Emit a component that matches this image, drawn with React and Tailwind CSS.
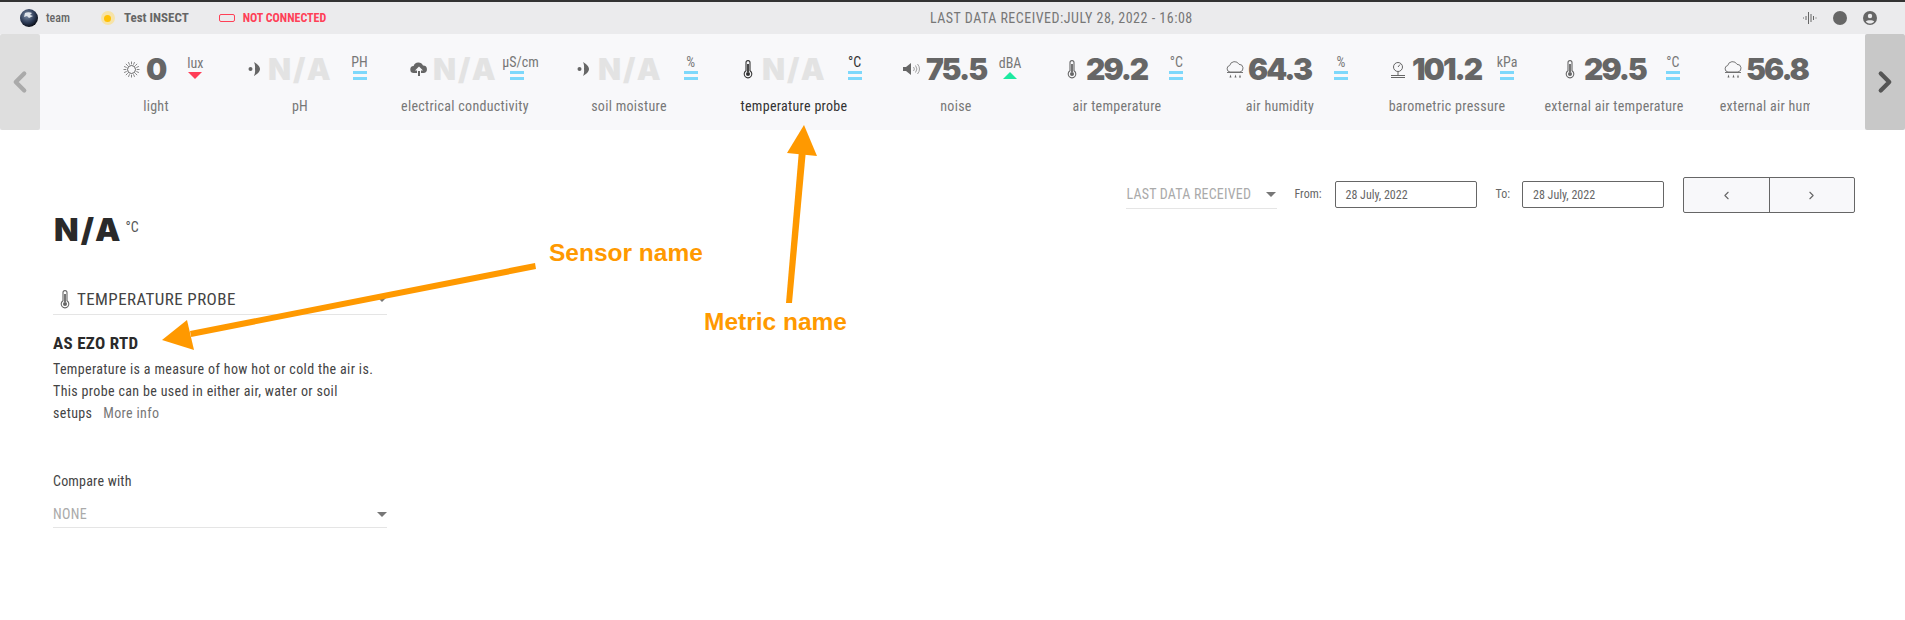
import { ChevronLeft, ChevronRight } from 'lucide-react';

const cond = { fontFamily: '"Roboto", sans-serif' };

const Thermo = ({ dark }) => (
  <svg width="10" height="19" viewBox="0 0 10 19" fill="none" stroke={dark ? '#333' : '#666'} strokeWidth="1.1">
    <path d="M3 10.8V2.6a2 2 0 0 1 4 0v8.2a3.8 3.8 0 1 1-4 0Z" />
    <path d="M5 4v8" strokeWidth="1.8" />
    <circle cx="5" cy="14" r="2" fill={dark ? '#333' : '#666'} stroke="none" />
  </svg>
);

const SunIcon = () => (
  <svg width="17" height="17" viewBox="0 0 17 17" fill="none" stroke="#666">
    <circle cx="8.5" cy="8.5" r="4" strokeWidth="1" />
    {[...Array(16)].map((_, i) => {
      const a = (i * Math.PI) / 8;
      return (
        <line key={i} x1={8.5 + 5.2 * Math.cos(a)} y1={8.5 + 5.2 * Math.sin(a)} x2={8.5 + 8 * Math.cos(a)} y2={8.5 + 8 * Math.sin(a)} strokeWidth="0.8" />
      );
    })}
  </svg>
);

const DropIcon = () => (
  <svg width="13" height="14" viewBox="0 0 13 14" fill="#666">
    <circle cx="2.5" cy="7" r="2" />
    <path d="M6 0c3 2 6 4 6 7s-3 5-6 7c1-2 1.300-4.500 1-7 .3-2.500 0-5-1-7Z" />
  </svg>
);

const CloudUp = () => (
  <svg width="18" height="14" viewBox="0 0 18 14" fill="#666">
    <path d="M4 11a3.500 3.500 0 0 1-.4-7A5 5 0 0 1 13 3.500 3.800 3.800 0 0 1 14 11h-3V8.500h2L9 4.500 5 8.500h2V11Z" />
    <rect x="8" y="9" width="2" height="5" />
  </svg>
);

const Speaker = () => (
  <svg width="18" height="14" viewBox="0 0 18 14" fill="none" stroke="#888" strokeWidth="0.8">
    <path d="M0 5h3l5-4v12L3 9H0Z" fill="#666" stroke="none" />
    <path d="M10.500 5a3 3 0 0 1 0 4M12.500 3.500a5.500 5.500 0 0 1 0 7M14.500 2a8 8 0 0 1 0 10" />
  </svg>
);

const RainCloud = () => (
  <svg width="18" height="19" viewBox="0 0 18 19" fill="none" stroke="#666" strokeWidth="0.9">
    <path d="M4 12a3.300 3.300 0 0 1-.3-6.500A5 5 0 0 1 13 4.300 3.900 3.900 0 0 1 14 12Z" />
    <path d="M1 12.500h16" />
    <path d="M4.500 14.500 3.500 17.500h2ZM9.500 14.500l-1 3h2ZM14 14.500l-1 3h2Z" fill="#666" stroke="none" />
  </svg>
);

const Gauge = () => (
  <svg width="16" height="17" viewBox="0 0 16 17" fill="none" stroke="#666" strokeWidth="1">
    <circle cx="8" cy="6" r="4.500" />
    <path d="M8 6l2-2.500" />
    <path d="M8 10.500V14M1 14.500h14M1 16.500h14" />
  </svg>
);

const metrics = [
  { label: 'light', value: '0', unit: 'lux', trend: 'down', icon: <SunIcon />, cell: 'w-[120px]', pad: 'pl-[27px]', gap: 'w-[23px]', unitMl: 'ml-[16px]' },
  { label: 'pH', value: 'N/A', unit: 'PH', icon: <DropIcon />, cell: 'w-[168px]', pad: 'pl-[32px]', gap: 'w-[20px]', unitMl: 'ml-[13px]' },
  { label: 'electrical conductivity', value: 'N/A', unit: 'μS/cm', icon: <CloudUp />, cell: 'w-[162px]', pad: 'pl-[26px]', gap: 'w-[23px]', unitMl: 'ml-[5px]', unitPad: 'pl-[8px]' },
  { label: 'soil moisture', value: 'N/A', unit: '%', icon: <DropIcon />, cell: 'w-[166px]', pad: 'pl-[31px]', gap: 'w-[21px]', unitMl: 'ml-[14px]' },
  { label: 'temperature probe', value: 'N/A', unit: '°C', icon: <Thermo dark />, cell: 'w-[164px]', pad: 'pl-[31px]', gap: 'w-[19px]', unitMl: 'ml-[14px]', active: true },
  { label: 'noise', value: '75.5', unit: 'dBA', trend: 'up', icon: <Speaker />, cell: 'w-[160px]', pad: 'pl-[27px]', gap: 'w-[23px]', unitMl: 'ml-[10px]' },
  { label: 'air temperature', value: '29.2', unit: '°C', icon: <Thermo />, cell: 'w-[162px]', pad: 'pl-[31px]', gap: 'w-[19px]', unitMl: 'ml-[15px]' },
  { label: 'air humidity', value: '64.3', unit: '%', icon: <RainCloud />, cell: 'w-[164px]', pad: 'pl-[28px]', gap: 'w-[22px]', unitMl: 'ml-[16px]' },
  { label: 'barometric pressure', value: '101.2', unit: 'kPa', icon: <Gauge />, cell: 'w-[170px]', pad: 'pl-[28px]', gap: 'w-[22px]', unitMl: 'ml-[12px]' },
  { label: 'external air temperature', value: '29.5', unit: '°C', icon: <Thermo />, cell: 'w-[164px]', pad: 'pl-[33px]', gap: 'w-[19px]', unitMl: 'ml-[13px]' },
  { label: 'external air humidity', value: '56.8', unit: '%', icon: <RainCloud />, cell: 'w-[166px]', pad: 'pl-[28px]', gap: 'w-[22px]', unitMl: 'ml-[15px]' },
];

function Trend({ kind }) {
  if (kind === 'down') return <div className="mt-[1px] w-0 h-0 border-x-[7px] border-x-transparent border-t-[7px] border-t-[#ff3d57]" />;
  if (kind === 'up') return <div className="mt-[1px] w-0 h-0 border-x-[7px] border-x-transparent border-b-[7px] border-b-[#1de9a0]" />;
  return (
    <div className="mt-[1px] w-[14px] flex flex-col gap-[3px]">
      <div className="h-[3px] bg-[#7dd8fb]" />
      <div className="h-[3px] bg-[#7dd8fb]" />
    </div>
  );
}

function Metric({ m }) {
  const na = m.value === 'N/A';
  return (
    <div className={`${m.cell} shrink-0 flex flex-col`}>
      <div className={`${m.pad} h-[52px] flex items-center`}>
        <div className={`${m.gap} shrink-0 flex items-center`}>{m.icon}</div>
        <div className={`${na ? 'text-[#e3e3e3] tracking-[2px]' : 'text-[#666666] tracking-[-2px]'} text-[30px] leading-none font-black whitespace-nowrap`} style={{ fontFamily: 'Inter, sans-serif' }}>{m.value}</div>
        <div className={`${m.unitMl} w-[28px] shrink-0 flex flex-col items-center -mt-[4px]`}>
          <div className={`${m.active ? 'text-[#333]' : 'text-[#777]'} ${m.unitPad || ''} text-[14px] leading-[16px] whitespace-nowrap [font-stretch:75%]`}>{m.unit}</div>
          <Trend kind={m.trend} />
        </div>
      </div>
      <div className={`${m.active ? 'text-[#333]' : 'text-[#777]'} mt-[2px] text-center text-[14px] leading-[18px] whitespace-nowrap [font-stretch:80%] tracking-[0.3px]`}>{m.label}</div>
    </div>
  );
}

const Caret = () => <div className="w-0 h-0 border-x-[5px] border-x-transparent border-t-[5px] border-t-[#777]" />;

export default function App() {
  return (
    <div className="relative h-[620px] overflow-hidden bg-white" style={cond}>
      <div className="h-[2px] bg-[#333]" />
      {/* top bar */}
      <div className="h-[32px] bg-[#ebebed] flex items-center text-[#666]">
        <div className="flex items-center pl-[20px] w-[930px]">
          <svg width="18" height="18" viewBox="0 0 18 18">
            <defs>
              <radialGradient id="globe" cx="40%" cy="35%" r="70%">
                <stop offset="0%" stopColor="#7e8fa8" />
                <stop offset="60%" stopColor="#2c3a55" />
                <stop offset="100%" stopColor="#05070d" />
              </radialGradient>
            </defs>
            <circle cx="9" cy="9" r="9" fill="url(#globe)" />
            <path d="M5 4c2-1 5-1 7 0l-2 2 3 1-4 2-2-2-3 1Z" fill="#dfe4ea" />
          </svg>
          <span className="ml-[8px] text-[12px] font-medium [font-stretch:85%]">team</span>
          <div className="ml-[31px] w-[14px] h-[14px] rounded-full bg-[#f6e3a8] flex items-center justify-center">
            <div className="w-[7px] h-[7px] rounded-full bg-[#ffc107]" />
          </div>
          <span className="ml-[9px] text-[13px] font-bold [font-stretch:80%]">Test INSECT</span>
          <div className="ml-[30px] w-[16px] h-[8px] rounded-[2px] border-[1.5px] border-[#ff4057]" />
          <span className="ml-[8px] text-[12px] font-bold text-[#ff4057] [font-stretch:80%]">NOT CONNECTED</span>
        </div>
        <div className="text-[14px] text-[#777] tracking-[0.5px] [font-stretch:80%] whitespace-nowrap">LAST DATA RECEIVED:JULY 28, 2022 - 16:08</div>
        <div className="flex-1 flex items-center justify-end gap-[14px] pr-[28px]">
          <svg width="14" height="14" viewBox="0 0 14 14" stroke="#666" strokeWidth="1">
            <path d="M.5 6.500v1M3 5v4M5.500 1v12M8 3v8M10.500 5v4M13 6.500v1" />
          </svg>
          <div className="w-[14px] h-[14px] rounded-full bg-[#666] ml-[2px]" />
          <svg width="14" height="14" viewBox="0 0 14 14" className="ml-[2px]">
            <circle cx="7" cy="7" r="7" fill="#666" />
            <circle cx="7" cy="5" r="2.200" fill="#ebebed" />
            <path d="M2.800 10.500C4 8.700 10 8.700 11.200 10.500 10 12 8.500 12.500 7 12.500S4 12 2.800 10.500Z" fill="#ebebed" />
          </svg>
        </div>
      </div>

      {/* metric strip */}
      <div className="h-[96px] bg-[#f8f8fa] flex">
        <div className="w-[40px] shrink-0 bg-[#dedede] rounded-[2px] flex items-center justify-center text-[#aaa]">
          <ChevronLeft size={34} strokeWidth={3} />
        </div>
        <div className="w-[1770px] pl-[56px] pt-[9px] overflow-hidden flex">
          {metrics.map((m) => <Metric key={m.label} m={m} />)}
        </div>
        <div className="flex-1" />
        <div className="w-[40px] shrink-0 bg-[#c8c8c8] rounded-[2px] flex items-center justify-center text-[#555]">
          <ChevronRight size={34} strokeWidth={3} />
        </div>
      </div>

      {/* body */}
      <div className="flex justify-between pl-[53px] pr-[50px]">
        <div className="w-[334px] pt-[85px]">
          <div className="flex items-start h-[30px]">
            <span className="text-[32px] leading-[30px] font-black text-[#2a2a2a] ml-[1px] tracking-[2px]" style={{ fontFamily: 'Inter, sans-serif' }}>N/A</span>
            <span className="ml-[3px] mt-[4px] text-[14px] leading-[16px] text-[#555] [font-stretch:80%]">°C</span>
          </div>
          <div className="mt-[40px] h-[30px] border-b border-[#e5e5e5] flex items-center justify-between">
            <div className="flex items-center pl-[7px]">
              <Thermo />
              <span className="ml-[7px] text-[17px] text-[#444] [font-stretch:80%] tracking-[0.4px]">TEMPERATURE PROBE</span>
            </div>
            <Caret />
          </div>
          <div className="mt-[17px] text-[17px] leading-[22px] font-bold text-[#2a2a2a] [font-stretch:80%] tracking-[0.3px]">AS EZO RTD</div>
          <p className="mt-[4px] text-[14px] leading-[22px] text-[#444] [font-stretch:80%] tracking-[0.35px]">
            Temperature is a measure of how hot or cold the air is. This probe can be used in either air, water or soil setups
            <span className="ml-[11px] text-[#777]">More info</span>
          </p>
          <div className="mt-[46px] text-[14px] leading-[22px] text-[#444] [font-stretch:80%] tracking-[0.2px]">Compare with</div>
          <div className="mt-[9px] h-[27px] border-b border-[#e5e5e5] flex items-center justify-between text-[14px] text-[#aaa] [font-stretch:80%] tracking-[0.3px]">
            NONE
            <Caret />
          </div>
        </div>

        <div className="pt-[47px] flex items-start">
          <div className="mt-[3px] w-[151px] h-[29px] border-b border-[#e5e5e5] flex items-center justify-between pr-[1px] text-[14px] text-[#aaa] [font-stretch:80%] tracking-[0.2px]">
            LAST DATA RECEIVED
            <Caret />
          </div>
          <span className="ml-[17px] mt-[9px] text-[12px] leading-[16px] text-[#666] [font-stretch:75%]">From:</span>
          <div className="ml-[13px] mt-[4px] w-[142px] h-[27px] border border-[#666] rounded-[2px] pl-[10px] flex items-center text-[12px] text-[#666] [font-stretch:85%]">28 July, 2022</div>
          <span className="ml-[19px] mt-[9px] text-[12px] leading-[16px] text-[#666] [font-stretch:75%]">To:</span>
          <div className="ml-[12px] mt-[4px] w-[142px] h-[27px] border border-[#666] rounded-[2px] pl-[10px] flex items-center text-[12px] text-[#666] [font-stretch:85%]">28 July, 2022</div>
          <div className="ml-[19px] w-[172px] h-[36px] border border-[#666] rounded-[2px] bg-[#f8f8fa] flex">
            <div className="flex-1 border-r border-[#666] flex items-center justify-center text-[#666]"><ChevronLeft size={13} /></div>
            <div className="flex-1 flex items-center justify-center text-[#666]"><ChevronRight size={13} /></div>
          </div>
        </div>
      </div>

      {/* annotations */}
      <svg className="absolute left-0 top-0 pointer-events-none" width="1905" height="620" fill="#ff9900" stroke="none">
        <path d="M535 263 190 331l1.200 6L536 269Z" />
        <path d="M162 340 187 320 194 350Z" />
        <path d="M799 150 786 303h6L806 150Z" />
        <path d="M804 125 787 153 817 156Z" />
      </svg>
      <span className="absolute left-[549px] top-[239px] text-[24.500px] leading-[28px] font-bold text-[#ff9900]" style={{ fontFamily: '"Liberation Sans", sans-serif' }}>Sensor name</span>
      <span className="absolute left-[704px] top-[308px] text-[24.500px] leading-[28px] font-bold text-[#ff9900]" style={{ fontFamily: '"Liberation Sans", sans-serif' }}>Metric name</span>
    </div>
  );
}
